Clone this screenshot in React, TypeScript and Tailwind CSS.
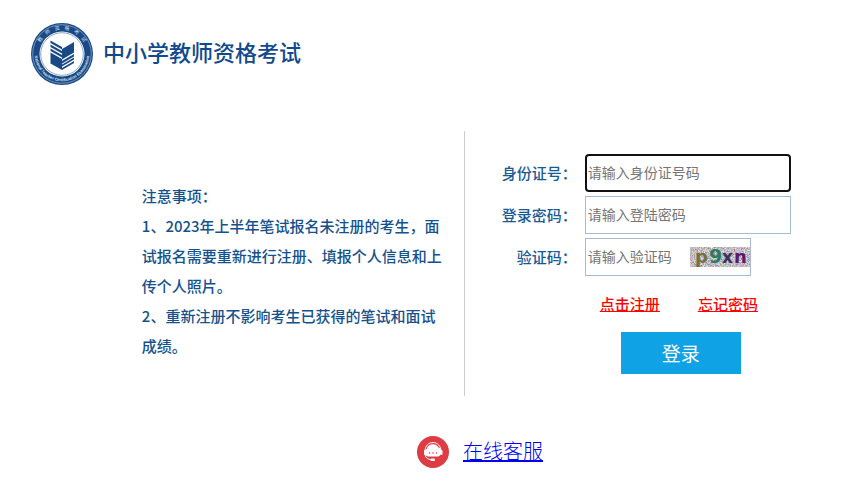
import type { ReactNode } from "react";

const notices = [
  "1、2023年上半年笔试报名未注册的考生，面试报名需要重新进行注册、填报个人信息和上传个人照片。",
  "2、重新注册不影响考生已获得的笔试和面试成绩。",
];

const Emblem = () => (
  <svg width="62" height="62" viewBox="0 0 62 62" className="overflow-visible" aria-hidden="true">
    <defs>
      <path id="arc-top" d="M6.500 31a24.500 24.500 0 0 1 49 0" />
      <path id="arc-bottom" d="M3.800 31a27.200 27.200 0 0 0 54.400 0" />
    </defs>
    <circle cx="31" cy="31" r="31" fill="#1a4a86" />
    <circle cx="31" cy="31" r="29.3" fill="none" stroke="#a9bfda" strokeWidth="0.6" />
    <circle cx="31" cy="31" r="22.5" fill="#fff" />
    <circle cx="31" cy="31" r="21.3" fill="none" stroke="#1a4a86" strokeWidth="0.5" />
    <g fill="#dbe6f2">
      <text fontSize="5" fontFamily="Noto Sans CJK SC, sans-serif">
        <textPath href="#arc-top" startOffset="50%" textAnchor="middle">
          {Array.from("教师资格考试").join("\u00a0\u00a0\u00a0\u00a0")}
        </textPath>
      </text>
      <text fontSize="4" fontWeight="700" fontFamily="Liberation Sans, sans-serif">
        <textPath href="#arc-bottom" startOffset="50%" textAnchor="middle">
          National Teacher Certification Examination
        </textPath>
      </text>
    </g>
    <g fill="#1a4a86">
      <path d="M19.500 17.500l11.500 6.500v2.500l-11.500-6.500z" />
      <path d="M19.500 21.500l11.500 6.500v2.500l-11.500-6.500z" />
      <path d="M19.500 25.500l11.500 6.500v2.500l-11.500-6.500z" />
      <path d="M19.500 29.500l11.500 6.500v11l-11.500-6.500z" />
      <path d="M43 19l-12 7v10.500l12-7z" />
      <path d="M43 31l-12 7v2.500l12-7z" />
      <path d="M43 34.500l-12 7v2l12-7z" />
      <path d="M43 38l-12 7v2l12-7z" />
    </g>
  </svg>
);

const Captcha = () => (
  <svg
    width="60"
    height="20"
    viewBox="0 0 60 20"
    className="overflow-visible"
    role="img"
    aria-label="验证码图片"
  >
    <defs>
      <filter id="grain" x="0" y="0" width="100%" height="100%" colorInterpolationFilters="sRGB">
        <feTurbulence type="fractalNoise" baseFrequency="0.7" numOctaves="2" seed="4" />
        <feColorMatrix values="0.8 0.2 0.1 0 0.21  0.2 0.8 0.1 0 0.18  0.1 0.2 0.8 0 0.21  0 0 0 0 1" />
      </filter>
    </defs>
    <rect width="60" height="20" filter="url(#grain)" />
    <g fontFamily="DejaVu Sans, sans-serif" fontWeight="700" fontSize="18">
      <text x="5" y="16" fill="#76713a">p</text>
      <text x="19" y="16" fontSize="19" fill="#2c7a62">9</text>
      <text x="32" y="16" fontSize="17" fill="#37305c">x</text>
      <text x="44" y="16" fill="#5a1a6c">n</text>
    </g>
  </svg>
);

const ServiceIcon = () => (
  <svg width="32" height="32" viewBox="0 0 32 32" aria-hidden="true">
    <circle cx="16" cy="16" r="16" fill="#de3c43" />
    <path d="M8 15.500c0-5.500 3.500-9 8-9s8 3.500 8 9" fill="none" stroke="#fff" strokeWidth="1" />
    <path
      d="M11.500 20.500a4 4 0 0 1-1.700-7.600 6.300 6.300 0 0 1 11.500-1.600 5 5 0 0 1 .2 9.200z"
      fill="#fff"
    />
    <rect x="7" y="14" width="2" height="5" rx="1" fill="#fff" />
    <rect x="23.500" y="14" width="2" height="5" rx="1" fill="#fff" />
    <circle cx="12.500" cy="17" r="0.800" fill="#de3c43" />
    <circle cx="16" cy="17" r="0.800" fill="#de3c43" />
    <circle cx="19.500" cy="17" r="0.800" fill="#de3c43" />
    <path d="M8 18.500c.5 3.500 3 5 6.500 5.200" fill="none" stroke="#fff" strokeWidth="1" />
    <rect x="13.500" y="22.500" width="4.500" height="2.400" rx="1.200" fill="#fff" />
  </svg>
);

const Field = ({ id, label, children }: { id: string; label: string; children: ReactNode }) => (
  <div className="flex items-center gap-2">
    <label htmlFor={id} className="w-24 text-right text-[15px] font-medium text-[#175a94]">
      {label}
    </label>
    {children}
  </div>
);

const App = () => {
  return (
    <div className="bg-white font-['Noto_Sans_CJK_SC',sans-serif]">
      <header className="flex items-center gap-[10px] px-[31px] pt-[23px]">
        <Emblem />
        <h1 className="pb-[6px] text-[22px] font-medium text-[#114a8c]">中小学教师资格考试</h1>
      </header>

      <main className="mt-[46px] flex">
        <section className="flex min-h-[265px] w-[54%] items-center justify-end pr-[22px] pt-[14px]">
          <div className="w-[300px] text-[15px] leading-[30px] font-medium text-[#15528c]">
            <h2>注意事项：</h2>
            {notices.map((n) => (
              <p key={n}>{n}</p>
            ))}
          </div>
        </section>

        <form className="flex flex-1 flex-col gap-1 border-l border-[#cccccc] pl-4 pt-[23px]">
          <Field id="idcard" label="身份证号：">
            <input
              id="idcard"
              type="text"
              placeholder="请输入身份证号码"
              className="h-[38px] w-[206px] rounded border-2 border-[#101010] px-px font-['Liberation_Sans','Noto_Sans_CJK_SC',sans-serif] text-sm text-black placeholder:text-[#757575]"
            />
          </Field>
          <Field id="password" label="登录密码：">
            <input
              id="password"
              type="password"
              placeholder="请输入登陆密码"
              className="h-[38px] w-[206px] border border-[#a4bbd2] px-[2px] font-['Liberation_Sans','Noto_Sans_CJK_SC',sans-serif] text-sm text-black placeholder:text-[#757575]"
            />
          </Field>
          <Field id="code" label="验证码：">
            <div className="flex h-[38px] w-[166px] items-center border border-[#a4bbd2]">
              <input
                id="code"
                type="text"
                placeholder="请输入验证码"
                className="h-full min-w-0 flex-1 px-[2px] font-['Liberation_Sans','Noto_Sans_CJK_SC',sans-serif] text-sm text-black placeholder:text-[#757575]"
              />
              <Captcha />
            </div>
          </Field>
          <div className="mt-3 flex gap-[38px] pl-[119px] text-[15px] leading-6 font-medium text-[#ff0000] underline">
            <a href="#register">点击注册</a>
            <a href="#forgot">忘记密码</a>
          </div>
          <button
            type="submit"
            className="mt-3 ml-[140px] h-[42px] w-[120px] bg-[#0fa2e4] text-[19px] text-white"
          >
            登录
          </button>
        </form>
      </main>

      <footer className="mt-10 flex items-center justify-center gap-[14px] pl-[101px]">
        <ServiceIcon />
        <a href="#service" className="pb-[2px] text-xl font-light text-[#0000ee] underline">
          在线客服
        </a>
      </footer>
    </div>
  );
};

export default App;
